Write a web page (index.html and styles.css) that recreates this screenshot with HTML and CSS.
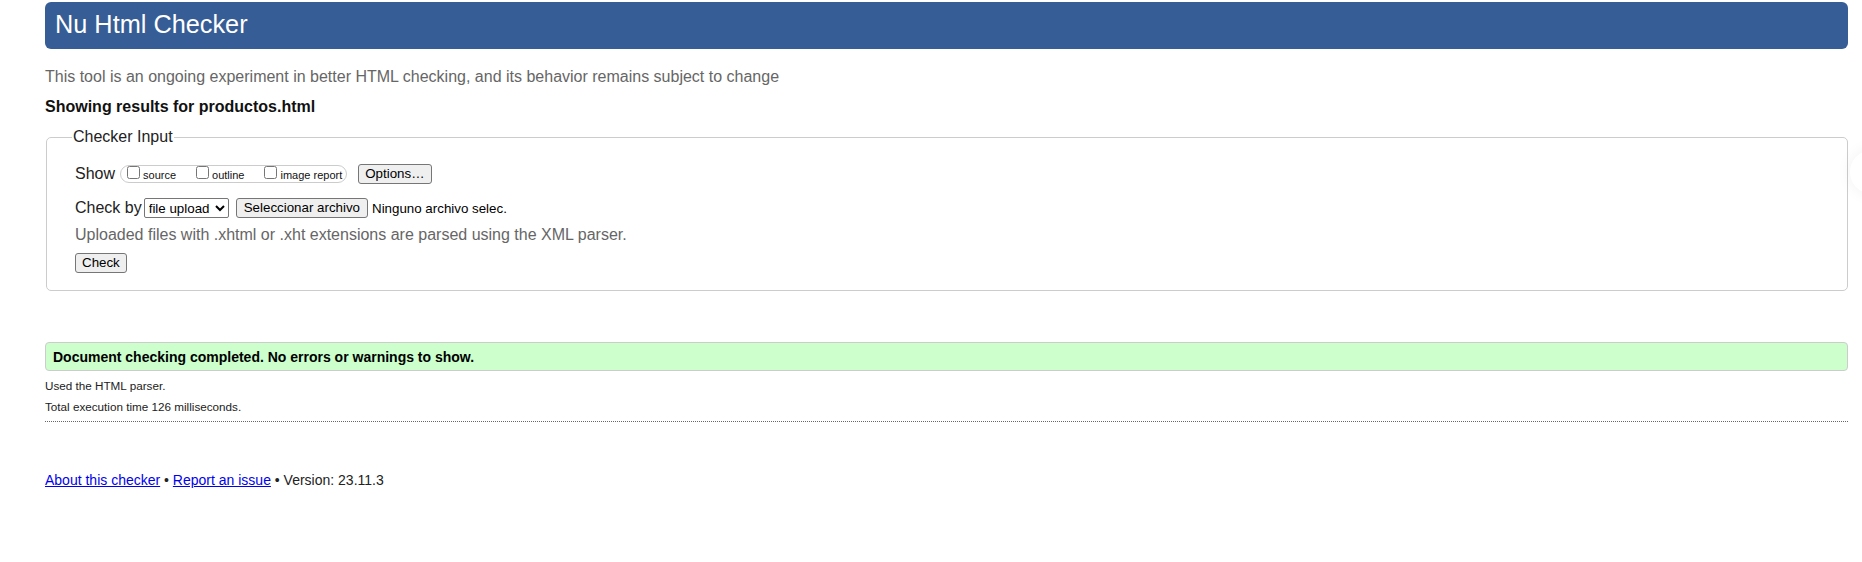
FILE: index.html
```html
<!DOCTYPE html>
<html lang="en">
<head>
<meta charset="utf-8">
<title>Showing results for productos.html - Nu Html Checker</title>
<link rel="stylesheet" href="styles.css">
</head>
<body>
<h1 class="title">Nu Html Checker</h1>
<p class="intro">This tool is an ongoing experiment in better HTML checking, and its behavior remains subject to change</p>
<p class="results-for">Showing results for productos.html</p>
<form class="checker-form">
  <fieldset class="input-box">
    <legend class="input-legend">Checker Input</legend>
    <div class="row row-show">
      <span class="row-label">Show</span>
      <span class="show-options">
        <label class="opt"><input type="checkbox"><span>source</span></label>
        <label class="opt"><input type="checkbox"><span>outline</span></label>
        <label class="opt"><input type="checkbox"><span>image report</span></label>
      </span>
      <button type="button" class="btn btn-options">Options…</button>
    </div>
    <div class="row row-checkby">
      <span class="row-label">Check by</span>
      <select class="select-by"><option>file upload</option></select>
      <button type="button" class="btn btn-file">Seleccionar archivo</button>
      <span class="file-status">Ninguno archivo selec.</span>
    </div>
    <p class="upload-note">Uploaded files with .xhtml or .xht extensions are parsed using the XML parser.</p>
    <div class="row row-submit">
      <button type="button" class="btn">Check</button>
    </div>
  </fieldset>
</form>
<p class="success">Document checking completed. No errors or warnings to show.</p>
<p class="details">Used the HTML parser.</p>
<p class="details">Total execution time 126 milliseconds.</p>
<hr class="sep">
<p class="footer"><a href="#">About this checker</a> • <a href="#">Report an issue</a> • Version: 23.11.3</p>
<div class="edge-float"></div>
</body>
</html>
```
FILE: styles.css
```css
html {
  background: #fff;
}
body {
  margin: 0;
  padding: 2px 14px 0 45px;
  font-family: "Liberation Sans", Arial, sans-serif;
  color: #000;
  background: #fff;
}
.title {
  margin: 0;
  height: 47px;
  box-sizing: border-box;
  padding: 0 10px 2px;
  line-height: 45px;
  font-size: 25.3px;
  font-weight: normal;
  color: #fff;
  background: #365d95;
  border-radius: 6px;
}
.intro {
  margin: 19px 0 0;
  font-size: 16px;
  line-height: 18px;
  color: #666;
}
.results-for {
  margin: 12px 0 0;
  font-size: 16px;
  line-height: 18px;
  font-weight: bold;
  color: #111;
}
.checker-form {
  margin: 0;
}
.input-box {
  margin: 12px 0 0 1px;
  padding: 18px 0 17px 28px;
  border: 1px solid #ccc;
  border-radius: 5px;
  min-width: 0;
}
.input-legend {
  margin-left: -3px;
  padding: 0 1px;
  font-size: 16px;
  line-height: 18px;
  color: #222;
}
.row {
  display: flex;
  align-items: center;
}
.row-show {
  height: 20px;
}
.row-label {
  font-size: 16px;
  line-height: 18px;
  color: #222;
}
.show-options {
  display: flex;
  align-items: flex-start;
  box-sizing: border-box;
  height: 18px;
  margin-left: 5px;
  padding: 0 4px 0 6px;
  border: 1px solid #ccc;
  border-radius: 9px;
}
.opt {
  display: flex;
  align-items: flex-start;
  margin-right: 20px;
  font-size: 11px;
  color: #111;
}
.opt:last-child {
  margin-right: 0;
}
.opt input {
  width: 13px;
  height: 13px;
  margin: 0 3px 0 0;
}
.opt span {
  line-height: 13px;
  margin-top: 3px;
}
.btn {
  font: 13.333px "Liberation Sans", Arial, sans-serif;
  line-height: 16px;
  padding: 1px 6px;
  border: 1px solid #767676;
  border-radius: 3px;
  background: #efefef;
  color: #000;
}
.btn-options {
  margin-left: 11px;
}
.row-checkby {
  margin-top: 14px;
  height: 20px;
}
.select-by {
  margin-left: 2px;
  width: 85px;
  height: 20px;
  font: 13.333px "Liberation Sans", Arial, sans-serif;
  border: 1px solid #767676;
  border-radius: 2px;
  background: #fff;
  color: #000;
}
.btn-file {
  margin-left: 7px;
  padding: 1px 7px;
}
.file-status {
  margin-left: 4px;
  font-size: 13.333px;
  color: #000;
}
.upload-note {
  margin: 8px 0 0;
  font-size: 16px;
  line-height: 18px;
  color: #666;
}
.row-submit {
  margin-top: 9px;
}
.success {
  margin: 51px 0 0;
  box-sizing: border-box;
  height: 29px;
  padding: 1px 7px 0;
  border: 1px solid #ccc;
  border-radius: 4px;
  background: #ccffcc;
  font-size: 14px;
  font-weight: bold;
  line-height: 26px;
  color: #000;
}
.details {
  margin: 8px 0 0;
  font-size: 11.7px;
  line-height: 14px;
  color: #222;
}
.details + .details {
  margin-top: 7px;
}
.sep {
  margin: 7px 0 0;
  height: 0;
  border: 0;
  border-top: 1px dotted #666;
}
.footer {
  margin: 50px 0 0;
  font-size: 14px;
  line-height: 16px;
  color: #222;
}
.footer a {
  color: #0000ee;
}
.edge-float {
  position: fixed;
  right: -32px;
  top: 150px;
  width: 44px;
  height: 44px;
  border-radius: 50%;
  background: #fff;
  box-shadow: 0 0 16px rgba(0, 0, 0, 0.06);
}
```
